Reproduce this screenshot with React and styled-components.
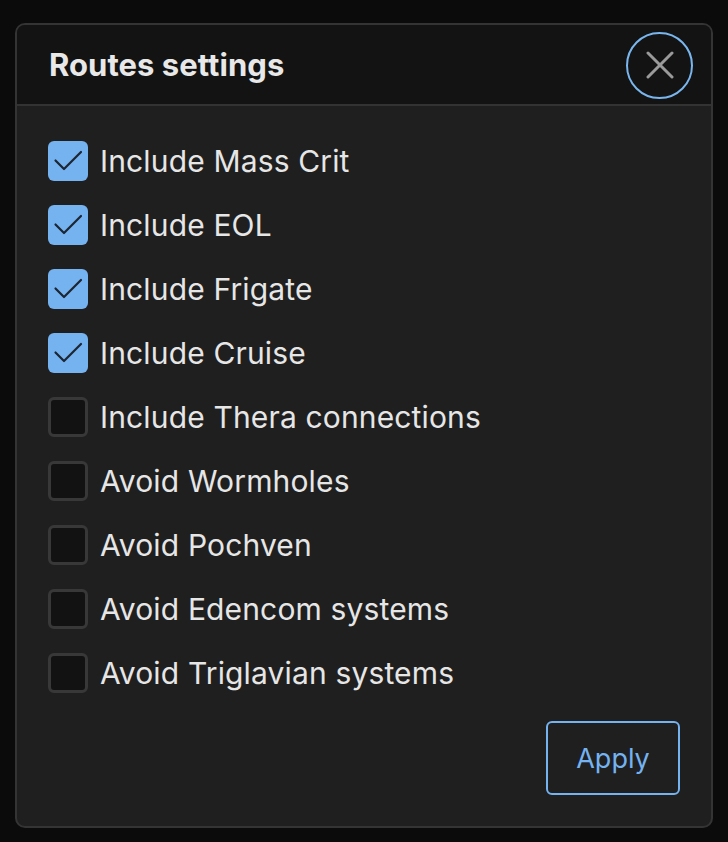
import React from "react";
import styled, { createGlobalStyle } from "styled-components";

const Global = createGlobalStyle`
    html, body {
        margin: 0;
        padding: 0;
        background: #0b0b0b;
        font-family: Inter, "Noto Sans", sans-serif;
    }
`;

const Page = styled.div`
    width: 728px;
    height: 842px;
    padding: 23px 15px 0 15px;
    box-sizing: border-box;
`;

const Dialog = styled.div`
    width: 698px;
    height: 805px;
    box-sizing: border-box;
    border: 2px solid #343434;
    border-radius: 10px;
    background: #1f1f1f;
    overflow: hidden;
    display: flex;
    flex-direction: column;
`;

const Header = styled.div`
    height: 79px;
    flex-shrink: 0;
    display: flex;
    align-items: center;
    justify-content: space-between;
    padding: 0 18px 0 32px;
    background: #131313;
    border-bottom: 2px solid #333;
`;

const Title = styled.h2`
    margin: 0;
    font-size: 31px;
    font-weight: 700;
    color: #e8e8e8;
    letter-spacing: 0.05px;
`;

const CloseButton = styled.button`
    width: 67px;
    height: 67px;
    border-radius: 50%;
    border: 2px solid #7ab6ee;
    background: transparent;
    display: flex;
    align-items: center;
    justify-content: center;
    padding: 0;
    margin-top: 1px;
    cursor: pointer;
`;

const Body = styled.div`
    flex: 1;
    display: flex;
    flex-direction: column;
    padding: 35px 31px 0 31px;
`;

const List = styled.div`
    display: flex;
    flex-direction: column;
    gap: 24px;
`;

const Row = styled.label`
    display: flex;
    align-items: center;
    gap: 12px;
    height: 40px;
    cursor: pointer;
`;

const Box = styled.span`
    width: 40px;
    height: 40px;
    box-sizing: border-box;
    border-radius: 6px;
    display: flex;
    align-items: center;
    justify-content: center;
    background: ${(p) => (p.checked ? "#74b2f0" : "#121212")};
    border: ${(p) => (p.checked ? "none" : "3px solid #383838")};
`;

const Label = styled.span`
    font-size: 30px;
    color: #e6e6e6;
    letter-spacing: 0.15px;
`;

const Footer = styled.div`
    display: flex;
    justify-content: flex-end;
    margin-top: 28px;
`;

const ApplyButton = styled.button`
    width: 134px;
    height: 74px;
    border: 2px solid #74b2f0;
    border-radius: 6px;
    background: transparent;
    color: #74b2f0;
    font-family: Inter, "Noto Sans", sans-serif;
    font-size: 27px;
    cursor: pointer;
`;

const options = [
    { label: "Include Mass Crit", checked: true },
    { label: "Include EOL", checked: true },
    { label: "Include Frigate", checked: true },
    { label: "Include Cruise", checked: true },
    { label: "Include Thera connections", checked: false },
    { label: "Avoid Wormholes", checked: false },
    { label: "Avoid Pochven", checked: false },
    { label: "Avoid Edencom systems", checked: false },
    { label: "Avoid Triglavian systems", checked: false },
];

const Check = () => (
    <svg width="40" height="40" viewBox="0 0 40 40" fill="none">
        <path d="M7.5 19.5L16 28L33 11" stroke="#1c2632" strokeWidth="2.2" strokeLinecap="round" strokeLinejoin="round" />
    </svg>
);

const Cross = () => (
    <svg width="28" height="28" viewBox="0 0 28 28" fill="none">
        <path d="M2 2L26 26M26 2L2 26" stroke="#9a9a9a" strokeWidth="3" strokeLinecap="round" />
    </svg>
);

export default function App() {
    return (
        <Page>
            <Global />
            <Dialog>
                <Header>
                    <Title>Routes settings</Title>
                    <CloseButton aria-label="Close">
                        <Cross />
                    </CloseButton>
                </Header>
                <Body>
                    <List>
                        {options.map((o) => (
                            <Row key={o.label}>
                                <Box checked={o.checked}>{o.checked && <Check />}</Box>
                                <Label>{o.label}</Label>
                            </Row>
                        ))}
                    </List>
                    <Footer>
                        <ApplyButton>Apply</ApplyButton>
                    </Footer>
                </Body>
            </Dialog>
        </Page>
    );
}
